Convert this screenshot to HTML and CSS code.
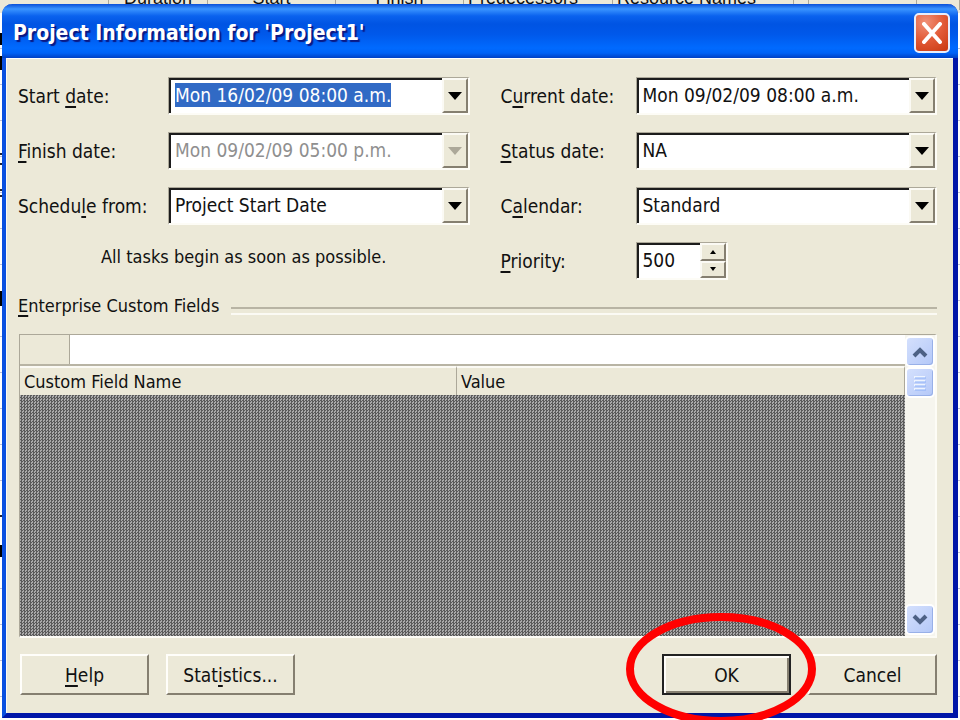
FILE: index.html
```html
<!DOCTYPE html>
<html lang="en">
<head>
    <meta charset="UTF-8">
    <meta name="viewport" content="width=device-width, initial-scale=1.0">
    <title>Project Information for 'Project1'</title>
    <link rel="stylesheet" href="styles.css">
</head>
<body>
    <div class="desktop">
        <!-- Gantt sheet behind the dialog -->
        <div class="sheet">
            <div class="sheet-head">
                <span></span>
                <span>Duration</span>
                <span>Start</span>
                <span>Finish</span>
                <span class="left">Predecessors</span>
                <span class="left">Resource Names</span>
                <span></span>
                <span></span>
                <span></span>
            </div>
            <div class="sheet-rows"></div>
        </div>

        <form class="dialog" onsubmit="return false">
            <div class="title-bar">
                <h1>Project Information for 'Project1'</h1>
                <button type="button" class="close" aria-label="Close">
                    <svg viewBox="0 0 20 22" width="20" height="22"><path d="M2 2 L18 20 M18 2 L2 20" stroke="#fff" stroke-width="4" stroke-linecap="round"/></svg>
                </button>
            </div>

            <div class="content">
                <div class="fields">
                    <label for="start"><span>Start <u>d</u>ate:</span></label>
                    <div class="combo">
                        <input type="text" id="start" value="Mon 16/02/09 08:00 a.m.">
                        <button type="button" class="drop" aria-label="Pick start date"></button>
                    </div>
                    <label for="current" class="second"><span>C<u>u</u>rrent date:</span></label>
                    <div class="combo">
                        <input type="text" id="current" value="Mon 09/02/09 08:00 a.m.">
                        <button type="button" class="drop" aria-label="Pick current date"></button>
                    </div>

                    <label for="finish"><span><u>F</u>inish date:</span></label>
                    <div class="combo">
                        <input type="text" id="finish" value="Mon 09/02/09 05:00 p.m." disabled>
                        <button type="button" class="drop" aria-label="Pick finish date" disabled></button>
                    </div>
                    <label for="status" class="second"><span><u>S</u>tatus date:</span></label>
                    <div class="combo">
                        <input type="text" id="status" value="NA">
                        <button type="button" class="drop" aria-label="Pick status date"></button>
                    </div>

                    <label for="schedule"><span>Schedu<u>l</u>e from:</span></label>
                    <div class="combo">
                        <select id="schedule"><option>Project Start Date</option></select>
                        <span class="drop"></span>
                    </div>
                    <label for="calendar" class="second"><span>C<u>a</u>lendar:</span></label>
                    <div class="combo">
                        <select id="calendar"><option>Standard</option></select>
                        <span class="drop"></span>
                    </div>

                    <p class="note">All tasks begin as soon as possible.</p>
                    <label for="priority" class="second"><span><u>P</u>riority:</span></label>
                    <div class="combo spinner">
                        <input type="text" id="priority" value="500">
                        <div class="spin">
                            <button type="button" class="up" aria-label="Increase"></button>
                            <button type="button" class="down" aria-label="Decrease"></button>
                        </div>
                    </div>
                </div>

                <h2 class="group"><span><u>E</u>nterprise Custom Fields</span></h2>

                <div class="grid">
                    <div class="grid-main">
                        <div class="entry">
                            <span class="entry-corner"></span>
                            <input type="text" aria-label="Entry">
                        </div>
                        <table>
                            <thead>
                                <tr><th class="name">Custom Field Name</th><th>Value</th></tr>
                            </thead>
                        </table>
                        <div class="hatch"></div>
                    </div>
                    <div class="scrollbar">
                        <button type="button" aria-label="Scroll up">
                            <svg viewBox="0 0 16 12" width="16" height="12"><path d="M2 10 L8 4 L14 10" fill="none" stroke="#4d6185" stroke-width="4"/></svg>
                        </button>
                        <div class="thumb">
                            <svg viewBox="0 0 12 16" width="12" height="16"><path d="M0 2H11M0 6H11M0 10H11M0 14H11" stroke="#eef4fe" stroke-width="2"/><path d="M1 3H12M1 7H12M1 11H12M1 15H12" stroke="#8cb0f8" stroke-width="1"/></svg>
                        </div>
                        <button type="button" class="last" aria-label="Scroll down">
                            <svg viewBox="0 0 16 12" width="16" height="12"><path d="M2 2 L8 8 L14 2" fill="none" stroke="#4d6185" stroke-width="4"/></svg>
                        </button>
                    </div>
                </div>

                <div class="buttons">
                    <button type="button" class="btn"><span><u>H</u>elp</span></button>
                    <button type="button" class="btn"><span>Stat<u>i</u>stics...</span></button>
                    <div class="ok-wrap">
                        <button type="submit" class="btn default">OK</button>
                        <svg class="ring" viewBox="0 0 190 112" width="190" height="112"><ellipse cx="95" cy="56" rx="91" ry="52" fill="none" stroke="#f00" stroke-width="8"/></svg>
                    </div>
                    <button type="button" class="btn">Cancel</button>
                </div>
            </div>
        </form>
    </div>

    <script>
        // The first field opens focused with its text selected
        const start = document.getElementById('start');
        start.focus();
        start.select();
    </script>
</body>
</html>
```

FILE: styles.css
```css
* { box-sizing: border-box; }
body {
    margin: 0;
    font-family: "DejaVu Sans Condensed", "DejaVu Sans", Tahoma, sans-serif;
    font-size: 19px;
    line-height: 24px;
    color: #111;
}
input, select, button { font: inherit; color: inherit; }
u { text-underline-offset: 3px; text-decoration-thickness: 2px; }
.desktop {
    display: grid;
    height: 100vh;
    overflow: hidden;
}
.sheet, .dialog { grid-area: 1 / 1; }

/* sheet behind */
.sheet { background: #fff; }
.sheet-head {
    display: grid;
    grid-template-columns: 109px 99px 128px 128px 149px 181px 15px 108px 1fr;
    height: 13px;
    background: #ece9d8;
    font-family: "Liberation Sans", Arial, sans-serif;
    font-size: 18px;
}
.sheet-head span {
    display: flex;
    align-items: flex-end;
    justify-content: center;
    height: 10px;
    border-right: 1px solid #aca899;
    white-space: nowrap;
}
.sheet-head .left { justify-content: flex-start; padding-left: 4px; }
.sheet-rows {
    height: 100%;
    background:
        linear-gradient(#000, #000) 0 20px / 2px 12px no-repeat,
        linear-gradient(#000, #000) 0 43px / 2px 14px no-repeat,
        linear-gradient(#223, #223) 0 140px / 2px 2px no-repeat,
        linear-gradient(#223, #223) 0 150px / 2px 2px no-repeat,
        linear-gradient(#223, #223) 0 176px / 2px 2px no-repeat,
        linear-gradient(#223, #223) 0 182px / 2px 2px no-repeat,
        linear-gradient(#000, #000) 0 278px / 2px 15px no-repeat,
        linear-gradient(#223, #223) 0 502px / 2px 2px no-repeat,
        linear-gradient(#000, #000) 0 532px / 2px 12px no-repeat,
        repeating-linear-gradient(#fff 0 35px, #c0c0d8 35px 36px);
}

/* dialog */
.dialog {
    align-self: start;
    margin: 4px 2px 0;
    border: 5px solid #0a3fd8;
    border-color: #0a50e0 #0016a8 #0016a8 #0a50e0;
    border-top: 0;
    border-radius: 10px 10px 0 0;
    background: #ece9d8;
}
.title-bar {
    display: flex;
    align-items: center;
    justify-content: space-between;
    height: 54px;
    margin: 0 -5px;
    padding: 4px 8px 0 11px;
    border-radius: 10px 10px 0 0;
    background: linear-gradient(#0a50d8 0, #3a94ff 5px, #0a62ee 12px, #0054e3 20px, #0058ea 30px, #006aff 44px, #0062f6 49px, #0040c4 54px);
}
.title-bar h1 {
    margin: 0;
    font-size: 21px;
    font-weight: 700;
    line-height: 28px;
    color: #fff;
    text-shadow: 2px 2px 1px #0a1883;
}
.close {
    display: grid;
    place-items: center;
    width: 36px;
    height: 40px;
    padding: 0;
    border: 2px solid #e8eefc;
    border-radius: 5px;
    background: radial-gradient(circle at 30% 20%, #f09078, #e25a36 50%, #c83810);
}
.content {
    padding: 18px 16px 18px 11px;
    border-top: 1px solid #fff;
    border-left: 1px solid #fbfaf4;
    margin-left: -1px;
}

/* form fields */
.fields {
    display: grid;
    grid-template-columns: 150px 1fr 166px 1fr;
    grid-auto-rows: 38px;
    row-gap: 17px;
    align-items: stretch;
}
.fields label { align-self: center; }
.fields .second { padding-left: 31px; }
.combo {
    display: flex;
    min-width: 0;
    border: 2px solid #fdfcf6;
    border-top: 1px solid #aca899;
    border-left: 1px solid #aca899;
    background: #fff;
}
.combo input, .combo select {
    flex: 1;
    min-width: 0;
    padding: 0 4px 4px;
    border: 0 solid #1c1c1c;
    border-width: 2px 0 0 2px;
    border-radius: 0;
    outline: 0;
    background: #fff;
    appearance: none;
}
.combo input:disabled { color: #8f8f8f; }
.combo input::selection { background: #316ac5; color: #fff; }
.drop {
    display: grid;
    place-items: center;
    width: 26px;
    padding: 0;
    border: 2px solid;
    border-color: #fbfaf4 #857f70 #857f70 #fbfaf4;
    background: #ece9d8;
}
.drop::before {
    content: "";
    border: 7px solid transparent;
    border-top: 8px solid #000;
    border-bottom: 0;
}
.drop:disabled::before { border-top-color: #aca899; }
.note {
    grid-column: span 2;
    margin: 3px 0 0;
    font-size: 18px;
    text-align: center;
}
.spinner { width: 92px; }
.spin { display: grid; width: 26px; }
.spin button {
    display: grid;
    place-items: center;
    padding: 0;
    border: 2px solid;
    border-color: #fbfaf4 #857f70 #857f70 #fbfaf4;
    background: #ece9d8;
}
.spin button::before { content: ""; border: 3px solid transparent; }
.spin .up::before { border-top: 0; border-bottom: 4px solid #000; }
.spin .down::before { border-bottom: 0; border-top: 4px solid #000; }

/* custom fields */
.group {
    display: flex;
    align-items: center;
    gap: 12px;
    margin: 14px 0 16px;
    font-size: 18px;
    font-weight: 400;
}
.group::after {
    content: "";
    flex: 1;
    height: 4px;
    margin-top: 10px;
    border-top: 2px solid #b8b4a4;
    border-bottom: 2px solid #fbfaf4;
}
.grid {
    display: flex;
    height: 304px;
    margin-left: 1px;
    border: 2px solid #fdfcf6;
    border-top: 1px solid #aca899;
    border-left: 1px solid #aca899;
}
.grid-main { flex: 1; display: flex; flex-direction: column; }
.entry { display: flex; height: 31px; border-bottom: 2px solid #b8b4a4; }
.entry-corner { width: 50px; border-right: 1px solid #aca899; }
.entry input { flex: 1; border: 0; background: #fff; }
table { width: 100%; border-spacing: 0; table-layout: fixed; }
th {
    height: 29px;
    padding: 0 4px;
    border-top: 2px solid #fbfaf4;
    border-right: 1px solid #aca899;
    font-size: 18px;
    font-weight: 400;
    text-align: left;
}
.name { width: 437px; }
.hatch {
    flex: 1;
    background: repeating-conic-gradient(#5a5a5a 0 25%, #aaa 0 50%) 0 0 / 3px 3px;
}
.scrollbar {
    display: flex;
    flex-direction: column;
    width: 30px;
    padding: 1px 0;
    background: #f6f5ee;
}
.scrollbar button, .thumb {
    display: grid;
    place-items: center;
    height: 31px;
    padding: 0;
    border: 2px solid #fff;
    border-radius: 5px;
    background: linear-gradient(135deg, #d4e0fd, #b4c8f8);
    box-shadow: inset -1px -1px #98b0e8;
}
.scrollbar .last { margin-top: auto; }

/* footer */
.buttons {
    display: flex;
    gap: 17px;
    margin: 16px 0 0 2px;
}
.btn {
    width: 129px;
    height: 41px;
    padding: 0;
    border: 2px solid;
    border-color: #fffefa #857f70 #857f70 #fffefa;
    background: #ece9d8;
}
.btn.default {
    border-color: #222;
    box-shadow: inset 2px 2px #fffefa, inset -2px -2px #857f70;
}
.ok-wrap { position: relative; margin-left: auto; }
.ring {
    position: absolute;
    top: -41px;
    left: -36px;
    pointer-events: none;
}
```
